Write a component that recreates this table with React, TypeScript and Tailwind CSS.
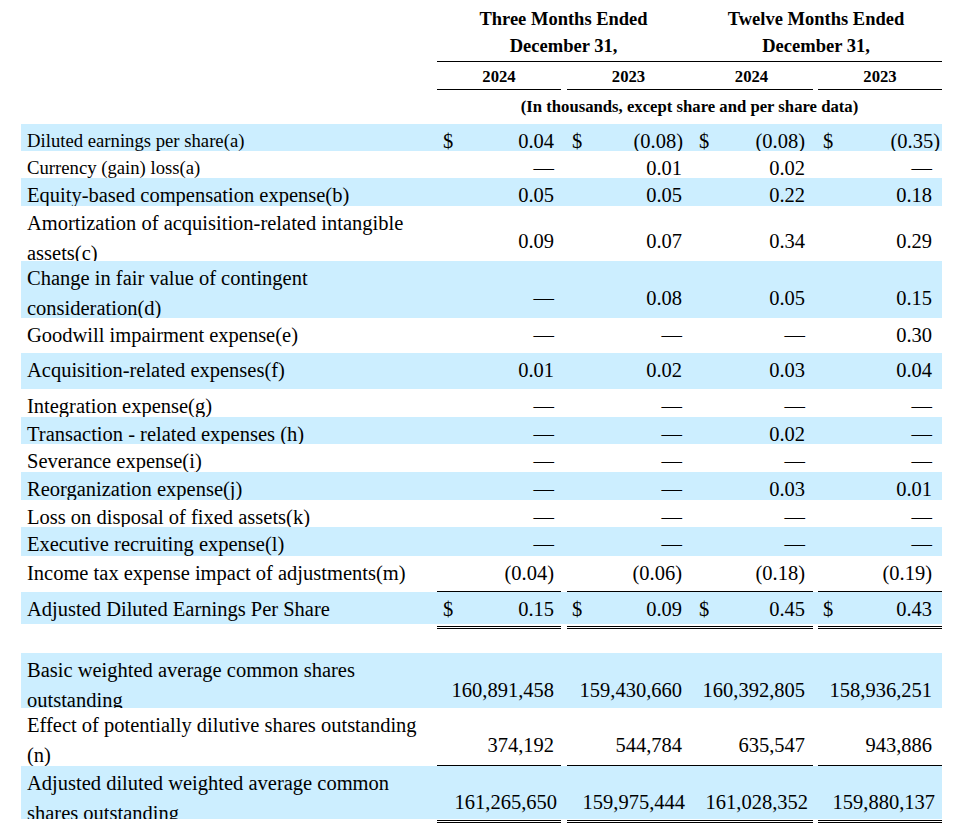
import React from "react";

type Row = {
  label: React.ReactNode;
  h: string;
  blue?: boolean;
  small?: boolean;
  two?: boolean;
  dollar?: boolean;
  vals: string[];
  under?: boolean;
  pb?: string;
  pr?: (string | undefined)[];
  after?: "dbl5" | "dbl4" | "space";
};

const GRID = "grid grid-cols-[416px_124px_6px_123px_123px_5px_124px]";

const COLS = [
  { start: "col-start-2", pl: "pl-[6px]", pr: "pr-[7px]" },
  { start: "col-start-4", pl: "pl-[5px]", pr: "pr-[8px]" },
  { start: "col-start-5", pl: "pl-[9px]", pr: "pr-[8px]" },
  { start: "col-start-7", pl: "pl-[5px]", pr: "pr-[10px]" },
];

const D = "—";

const rows: Row[] = [
  {
    label: "Diluted earnings per share(a)",
    h: "h-[27px]",
    blue: true,
    small: true,
    dollar: true,
    vals: ["0.04", "(0.08)", "(0.08)", "(0.35)"],
    pr: [undefined, "pr-[7px]", undefined, "pr-[2px]"],
  },
  { label: "Currency (gain) loss(a)", h: "h-[27px]", small: true, vals: [D, "0.01", "0.02", D] },
  { label: "Equity-based compensation expense(b)", h: "h-[28px]", blue: true, vals: ["0.05", "0.05", "0.22", "0.18"] },
  {
    label: "Amortization of acquisition-related intangible assets(c)",
    h: "h-[55px]",
    two: true,
    pb: "pb-[5px]",
    vals: ["0.09", "0.07", "0.34", "0.29"],
  },
  {
    label: "Change in fair value of contingent consideration(d)",
    h: "h-[57px]",
    blue: true,
    two: true,
    pb: "pb-[5px]",
    vals: [D, "0.08", "0.05", "0.15"],
  },
  { label: "Goodwill impairment expense(e)", h: "h-[35px]", vals: [D, D, D, "0.30"] },
  { label: "Acquisition-related expenses(f)", h: "h-[36px]", blue: true, vals: ["0.01", "0.02", "0.03", "0.04"] },
  { label: "Integration expense(g)", h: "h-[28px]", vals: [D, D, D, D] },
  { label: "Transaction - related expenses (h)", h: "h-[27px]", blue: true, vals: [D, D, "0.02", D] },
  {
    label: (
      <>
        Severance expense(
        <span className="underline decoration-wavy decoration-red-600 decoration-1 underline-offset-[3px]">i</span>)
      </>
    ),
    h: "h-[28px]",
    vals: [D, D, D, D],
  },
  { label: "Reorganization expense(j)", h: "h-[28px]", blue: true, vals: [D, D, "0.03", "0.01"] },
  { label: "Loss on disposal of fixed assets(k)", h: "h-[27px]", vals: [D, D, D, D] },
  { label: "Executive recruiting expense(l)", h: "h-[29px]", blue: true, vals: [D, D, D, D] },
  {
    label: "Income tax expense impact of adjustments(m)",
    h: "h-[36px]",
    under: true,
    vals: ["(0.04)", "(0.06)", "(0.18)", "(0.19)"],
  },
  {
    label: "Adjusted Diluted Earnings Per Share",
    h: "h-[32px]",
    blue: true,
    dollar: true,
    vals: ["0.15", "0.09", "0.45", "0.43"],
    after: "dbl5",
  },
  {
    label: "Basic weighted average common shares outstanding",
    h: "h-[55px]",
    blue: true,
    two: true,
    pb: "pb-[3px]",
    vals: ["160,891,458", "159,430,660", "160,392,805", "158,936,251"],
  },
  {
    label: "Effect of potentially dilutive shares outstanding (n)",
    h: "h-[58px]",
    two: true,
    under: true,
    pb: "pb-[5px]",
    vals: ["374,192", "544,784", "635,547", "943,886"],
  },
  {
    label: "Adjusted diluted weighted average common shares outstanding",
    h: "h-[53px]",
    blue: true,
    two: true,
    vals: ["161,265,650", "159,975,444", "161,028,352", "159,880,137"],
    pr: ["pr-[4px]", "pr-[5px]", "pr-[5px]", "pr-[7px]"],
    after: "dbl4",
  },
];

function DoubleStrip({ tall }: { tall: boolean }) {
  const line = tall
    ? "row-start-1 mt-[2px] border-t-[3px] border-double border-black"
    : "row-start-1 mt-[1px] border-t-[3px] border-double border-black";
  return (
    <div className={`${GRID} ${tall ? "h-[5px]" : "h-[4px]"}`}>
      <div className={`col-start-2 ${line}`} />
      <div className={`col-start-4 col-span-2 ${line}`} />
      <div className={`col-start-7 ${line}`} />
    </div>
  );
}

function BodyRow({ r }: { r: Row }) {
  return (
    <div
      className={`${GRID} grid-rows-[minmax(0,1fr)] overflow-hidden ${r.h} ${r.blue ? "bg-[#cceeff]" : ""}`}
    >
      <div
        className={`col-start-1 row-start-1 pl-[6px] pr-[6px] pt-[2px] leading-[30px] ${
          r.small ? "text-[18.7px]" : "text-[20.5px]"
        }`}
      >
        {r.label}
      </div>
      {r.vals.map((v, i) => {
        const c = COLS[i];
        const pr = (r.pr && r.pr[i]) || c.pr;
        const vert = r.two ? `items-end ${r.pb || "pb-[2px]"}` : "items-start pt-[2px]";
        return (
          <div
            key={i}
            className={`${c.start} row-start-1 flex ${vert} ${c.pl} ${pr} ${
              r.under ? "border-b border-black" : ""
            } text-[20.5px]`}
          >
            <div className="flex w-full justify-between leading-[30px] whitespace-nowrap">
              <span>{r.dollar ? "$" : ""}</span>
              <span>{v}</span>
            </div>
          </div>
        );
      })}
    </div>
  );
}

export default function App() {
  return (
    <div className="w-[960px] min-h-[840px] bg-white text-black font-['Liberation_Serif','Times_New_Roman',serif]">
      <div className="ml-[21px] w-[921px]">
        {/* Header titles */}
        <div className={`${GRID} h-[62px]`}>
          <div className="col-start-2 col-span-6 grid grid-cols-[253px_252px] border-b border-black pt-[6px] pb-[1px] text-center text-[18.5px] font-bold leading-[27px]">
            <div>
              Three Months Ended
              <br />
              December 31,
            </div>
            <div>
              Twelve Months Ended
              <br />
              December 31,
            </div>
          </div>
        </div>
        {/* Years */}
        <div className={`${GRID} h-[28px]`}>
          {["2024", "2023", "2024", "2023"].map((y, i) => (
            <div
              key={i}
              className={`${COLS[i].start} row-start-1 border-b border-black pt-[3px] text-center text-[16.7px] font-bold leading-[24px]`}
            >
              {y}
            </div>
          ))}
        </div>
        {/* Caption */}
        <div className={`${GRID} h-[34px]`}>
          <div className="col-start-2 col-span-6 pt-[3px] text-center text-[16.7px] font-bold leading-[27px]">
            (In thousands, except share and per share data)
          </div>
        </div>
        {/* Body */}
        {rows.map((r, i) => (
          <React.Fragment key={i}>
            <BodyRow r={r} />
            {r.after === "dbl5" && (
              <>
                <DoubleStrip tall />
                <div className="h-[24px]" />
              </>
            )}
            {r.after === "dbl4" && <DoubleStrip tall={false} />}
          </React.Fragment>
        ))}
      </div>
    </div>
  );
}
